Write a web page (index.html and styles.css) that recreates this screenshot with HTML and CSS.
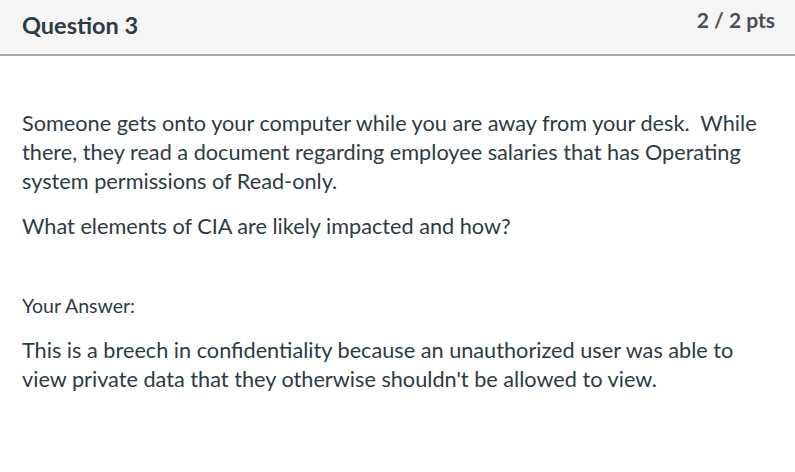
FILE: index.html
```html
<!DOCTYPE html>
<html>
<head>
<meta charset="utf-8">
<link rel="stylesheet" href="styles.css">
</head>
<body>
<div class="question">
  <div class="q-header">
    <h2 class="q-title">Question 3</h2>
    <div class="q-points">2 / 2 pts</div>
  </div>
  <div class="q-body">
    <div class="q-text">
      <p>Someone gets onto your computer while you are away from your desk.&nbsp; While there, they read a document regarding employee salaries that has Operating system permissions of Read-only.</p>
      <p>What elements of CIA are likely impacted and how?</p>
    </div>
    <div class="q-answer">
      <div class="answer-label">Your Answer:</div>
      <p class="answer-text">This is a breech in confidentiality because an unauthorized user was able to view private data that they otherwise shouldn't be allowed to view.</p>
    </div>
  </div>
</div>
</body>
</html>
```
FILE: styles.css
```css
html, body {
  margin: 0;
  padding: 0;
  background: #ffffff;
}
body {
  font-family: Lato, "Liberation Sans", sans-serif;
  color: #2d3b45;
}
.q-header {
  display: flex;
  justify-content: space-between;
  align-items: flex-start;
  height: 56px;
  box-sizing: border-box;
  background: #f5f5f5;
  border-bottom: 2px solid #aaaaaa;
  padding: 0 20px 0 22px;
}
.q-title {
  margin: 0;
  font-size: 23.5px;
  font-weight: 700;
  line-height: 50px;
}
.q-points {
  font-size: 21px;
  font-weight: 700;
  line-height: 40px;
  color: #4a4f54;
}
.q-body {
  padding: 53px 22px 0 22px;
}
.q-text p {
  margin: 0 0 16px 0;
  font-size: 21.7px;
  line-height: 29px;
}
.q-answer {
  padding-top: 37px;
}
.answer-label {
  font-size: 19.5px;
  line-height: 24px;
  margin-bottom: 18px;
}
.answer-text {
  margin: 0;
  font-size: 21.7px;
  line-height: 29px;
}
```
